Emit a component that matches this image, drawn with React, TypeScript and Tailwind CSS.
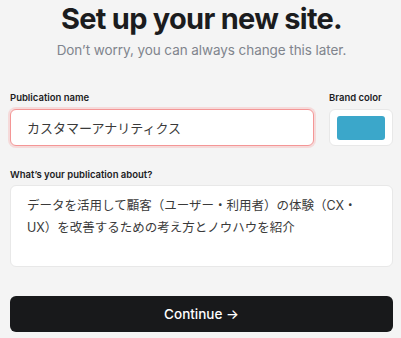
const font = "font-['Inter','Noto_Sans_CJK_JP',sans-serif]";

export default function App() {
  return (
    <div className={`${font} min-h-[338px] w-[401px] bg-[#f4f4f4] pt-[1px] pl-[10px] pr-[8px]`}>
      <h1 className="text-center text-[29px] leading-[36px] font-bold tracking-[-0.025em] text-[#1b1c1e]">
        Set up your new site.
      </h1>
      <p className="mt-[3px] text-center text-[13.5px] leading-[20px] tracking-[-0.005em] text-[#80848d]">
        Don’t worry, you can always change this later.
      </p>

      <div className="mt-[30px] flex gap-[15px]">
        <div className="flex-1">
          <label className="block text-[9.5px] leading-[16px] font-semibold text-[#1b1c1e]">
            Publication name
          </label>
          <input
            defaultValue="カスタマーアナリティクス"
            className="mt-[3px] h-[37px] w-full rounded-[6px] border border-[#f49696] bg-white px-[16px] text-[13px] text-[#3a3a3a] shadow-[0_0_0_2px_rgba(248,113,113,0.2)] outline-none"
          />
        </div>
        <div className="w-[64px]">
          <label className="block text-[9.5px] leading-[16px] font-semibold whitespace-nowrap text-[#1b1c1e]">
            Brand color
          </label>
          <div className="mt-[3px] flex h-[37px] items-center justify-center rounded-[6px] border border-[#e8e8e8] bg-white">
            <div className="h-[24px] w-[48px] rounded-[3px] bg-[#3ba7ca]" />
          </div>
        </div>
      </div>

      <label className="mt-[21px] block text-[9.5px] leading-[16px] font-semibold text-[#1b1c1e]">
        What’s your publication about?
      </label>
      <textarea
        defaultValue="データを活用して顧客（ユーザー・利用者）の体験（CX・UX）を改善するための考え方とノウハウを紹介"
        className="mt-[2px] block h-[82px] w-full resize-none rounded-[6px] border border-[#e8e8e8] bg-white py-[9px] pr-[30px] pl-[16px] text-[12.5px] leading-[22px] text-[#3a3a3a] outline-none"
      />

      <button className="mt-[29px] flex h-[36px] w-full items-center justify-center rounded-[6px] bg-[#18191b] text-[13.5px] font-medium text-white">
        Continue →
      </button>
    </div>
  );
}
